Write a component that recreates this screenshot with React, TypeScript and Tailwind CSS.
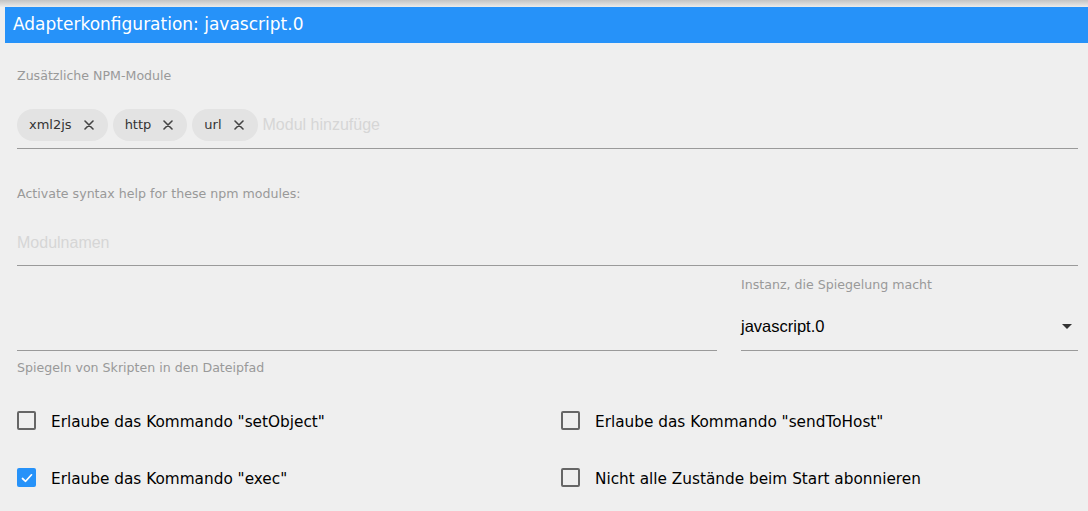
import React from "react";

const chips = ["xml2js", "http", "url"];

function Chip({ label }: { label: string }) {
  return (
    <div className="flex h-[32px] items-center rounded-full bg-[#e3e3e3] pl-[12px] pr-[14px] text-[13px] text-[#333]">
      <span>{label}</span>
      <svg className="ml-[12px] h-[10px] w-[10px]" viewBox="0 0 10 10">
        <path d="M1 1 L9 9 M9 1 L1 9" stroke="#444" strokeWidth="1.6" strokeLinecap="round" />
      </svg>
    </div>
  );
}

function Check({ checked, label }: { checked?: boolean; label: string }) {
  return (
    <div className="flex items-center">
      {checked ? (
        <div className="flex h-[19px] w-[19px] items-center justify-center rounded-[2px] bg-[#2692f9]">
          <svg className="h-[12px] w-[12px]" viewBox="0 0 12 12">
            <path d="M1.5 6.5 L4.6 9.3 L10.5 2.8" fill="none" stroke="#fff" strokeWidth="1.7" strokeLinecap="round" strokeLinejoin="round" />
          </svg>
        </div>
      ) : (
        <div className="h-[19px] w-[19px] rounded-[2px] border-2 border-[#666]" />
      )}
      <span className="ml-[15px] mt-[3px] text-[15.3px] text-black">{label}</span>
    </div>
  );
}

export default function App() {
  return (
    <div className="h-[511px] w-full overflow-hidden bg-[#efefef] font-['DejaVu_Sans',sans-serif]">
      <div className="h-[7px] bg-gradient-to-b from-[#c4c4c4] to-[#ebebeb]" />
      <div className="ml-[5px] flex h-[36px] items-center bg-[#2692f9] pl-[8px] text-[17px] text-white">
        Adapterkonfiguration: javascript.0
      </div>

      <div className="pl-[17px] pr-[10px]">
        <div className="pt-[26px] text-[12.6px] leading-[14px] text-[#999]">Zusätzliche NPM-Module</div>
        <div className="mt-[26px] flex items-center gap-[5px] border-b border-[#9a9a9a] pb-[7px]">
          {chips.map((c) => (
            <Chip key={c} label={c} />
          ))}
          <span className="font-['Liberation_Sans',sans-serif] text-[16px] text-[#d6d6d6]">Modul hinzufüge</span>
        </div>

        <div className="mt-[38px] text-[12.6px] leading-[14px] text-[#999]">Activate syntax help for these npm modules:</div>
        <div className="mt-[33px] border-b border-[#9a9a9a] pb-[13px] font-['Liberation_Sans',sans-serif] text-[16px] leading-[18px] text-[#d6d6d6]">
          Modulnamen
        </div>

        <div className="grid grid-cols-[700px_1fr] gap-[24px]">
          <div className="border-b border-[#9a9a9a]" />
          <div className="border-b border-[#9a9a9a]">
            <div className="mt-[12px] text-[12.6px] leading-[14px] text-[#999]">Instanz, die Spiegelung macht</div>
            <div className="mt-[25px] flex items-center justify-between pb-[15px] pr-[6px]">
              <span className="font-['Liberation_Sans',sans-serif] text-[16.5px] leading-[18px] text-black">javascript.0</span>
              <svg className="h-[5px] w-[10px]" viewBox="0 0 10 5">
                <path d="M0 0 L10 0 L5 5 Z" fill="#333" />
              </svg>
            </div>
          </div>
        </div>
        <div className="mt-[10px] text-[12.6px] leading-[14px] text-[#999]">Spiegeln von Skripten in den Dateipfad</div>

        <div className="mt-[33px] grid grid-cols-[544px_1fr] gap-y-[31px]">
          <Check label={'Erlaube das Kommando "setObject"'} />
          <Check label={'Erlaube das Kommando "sendToHost"'} />
          <Check checked label={'Erlaube das Kommando "exec"'} />
          <Check label="Nicht alle Zustände beim Start abonnieren" />
        </div>
      </div>
    </div>
  );
}
